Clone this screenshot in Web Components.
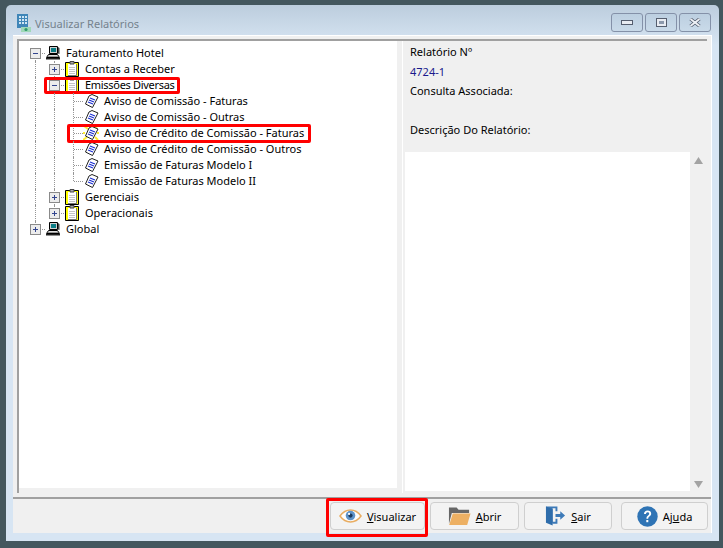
<!DOCTYPE html>
<html>
<head>
<meta charset="utf-8">
<title>Visualizar Relatórios</title>
<style>
html, body { margin: 0; height: 100%; background: #44575e; }
body { box-sizing: border-box; width: 723px; height: 548px; overflow: hidden; padding: 5px 4px 7px 6px; font: 11px "Noto Sans", sans-serif; color: #000; }
</style>
</head>
<body>
<report-window title="Visualizar Relatórios">
  <tree-panel slot="tree">
    <tree-row guides="" toggle="minus" icon="pc">Faturamento Hotel</tree-row>
    <tree-row guides="v,t" toggle="plus" icon="clip">Contas a Receber</tree-row>
    <tree-row guides="v,t" toggle="minus" icon="clip" mark="1">Emissões Diversas</tree-row>
    <tree-row guides="v,v,t" icon="doc">Aviso de Comissão - Faturas</tree-row>
    <tree-row guides="v,v,t" icon="doc">Aviso de Comissão - Outras</tree-row>
    <tree-row guides="v,v,t" icon="doc-new" mark="2">Aviso de Crédito de Comissão - Faturas</tree-row>
    <tree-row guides="v,v,t" icon="doc">Aviso de Crédito de Comissão - Outros</tree-row>
    <tree-row guides="v,v,t" icon="doc">Emissão de Faturas Modelo I</tree-row>
    <tree-row guides="v,v,l" icon="doc">Emissão de Faturas Modelo II</tree-row>
    <tree-row guides="v,t" toggle="plus" icon="clip">Gerenciais</tree-row>
    <tree-row guides="v,l" toggle="plus" icon="clip">Operacionais</tree-row>
    <tree-row guides="" toggle="plus" icon="pc" last>Global</tree-row>
  </tree-panel>
  <report-info slot="info" number="4724-1"></report-info>
  <action-button slot="actions" icon="eye" key="V" rest="isualizar" marked></action-button>
  <action-button slot="actions" icon="folder" key="A" rest="brir"></action-button>
  <action-button slot="actions" icon="exit" key="S" rest="air" narrow></action-button>
  <action-button slot="actions" icon="help" pre="Aj" key="u" rest="da" far></action-button>
</report-window>

<script>
const ICONS = {
  pc: `<svg width="16" height="16" viewBox="0 0 16 16">
    <path d="M4.500 1.500h8v7h-8z" fill="#d0d0d0" stroke="#000"/><path d="M6 3h5v4H6z" fill="#0a7d86"/>
    <path d="M13 2l1.500 1v6L13 8.500z" fill="#444"/>
    <path d="M3.500 9.500h9l2 3h-13z" fill="#e0e0e0" stroke="#000"/><path d="M1 13h14v1.500H1z" fill="#222"/>
    <path d="M3.500 11.500h9" stroke="#555" stroke-dasharray="1 1"/></svg>`,
  clip: `<svg width="16" height="16" viewBox="0 0 16 16">
    <path d="M1.500 1.500h13v14h-13z" fill="#ffff00" stroke="#000"/>
    <path d="M4 3h8v11H4z" fill="#fff"/><path d="M12.500 3v11.500H4" fill="none" stroke="#777"/>
    <path d="M6 .5h4v2.500H6z" fill="#a8a8a8" stroke="#444"/>
    <path d="M5 6.500h6M5 8.500h6M5 10.500h6M5 12.500h6" stroke="#c4c4c4"/></svg>`,
  doc: `<svg width="16" height="16" viewBox="0 0 16 16">
    <path d="M6 3l3-1.500 6 2.500-5.500 10.500L2.500 11z" fill="#fff" stroke="#222"/>
    <path d="M7 5l5 2M6 7l5 2M5 9l5 2" stroke="#1b2fd0" stroke-width="1.200"/></svg>`,
  'doc-new': `<svg width="16" height="16" viewBox="0 0 16 16">
    <path d="M1 1l4 3M15.500 0L12 3M0 15l4-3M15 15l-3-3M0 8h2M14 8h2" stroke="#ffee33" stroke-width="2"/>
    <path d="M6 3l3-1.500 6 2.500-5.500 10.500L2.500 11z" fill="#fff" stroke="#222"/>
    <path d="M7 5l5 2M6 7l5 2M5 9l5 2" stroke="#1b2fd0" stroke-width="1.200"/></svg>`,
  eye: `<svg width="23" height="14" viewBox="0 0 24 14">
    <path d="M1 7C5 1.500 9 .8 12 .8S19 1.500 23 7c-4 5.500-8 6.200-11 6.200S5 12.500 1 7z" fill="#fff" stroke="#e9ad62" stroke-width="1.500"/>
    <circle cx="12" cy="6.500" r="5" fill="#5f93c8"/><circle cx="12" cy="6.500" r="2.200" fill="#1d3a5c"/><circle cx="10.500" cy="4.800" r="1.100" fill="#fff"/></svg>`,
  folder: `<svg width="23" height="20" viewBox="0 0 24 20">
    <path d="M1 1h8l2 2.500h11V7H4L1 18z" fill="#666"/>
    <path d="M5 7.500h18.500L20 19.500H1.200z" fill="#edb063"/></svg>`,
  exit: `<svg width="21" height="22" viewBox="0 0 22 22">
    <path d="M1 1h12v5h-2V3H8v14h3v-3h2v5H8z" fill="#3d7ab8"/>
    <path d="M1 1l7 3v17l-7-3z" fill="#2f6dab"/>
    <path d="M11 9h5V6l5 4.500-5 4.500v-3h-5z" fill="#3d7ab8"/></svg>`,
  help: `<svg width="21" height="21" viewBox="0 0 21 21">
    <circle cx="10.500" cy="10.500" r="10.200" fill="#2f74b5"/>
    <path d="M7 8c0-2.200 1.500-3.400 3.600-3.400S14.200 5.800 14.200 7.700c0 2.600-3 2.600-3 5H9.400c0-3.200 2.800-3.200 2.800-5 0-.9-.6-1.500-1.600-1.500S9 6.900 9 8z" fill="#fff"/>
    <rect x="9.300" y="14" width="2" height="2.200" fill="#fff"/></svg>`,
  app: `<svg width="16" height="20" viewBox="0 0 16 20">
    <path d="M1 1h11v14H1z" fill="#3f86b8"/>
    <path d="M3 3h2v2H3zM6 3h2v2H6zM9 3h2v2H9zM3 6h2v2H3zM6 6h2v2H6zM9 6h2v2H9zM3 9h2v2H3zM6 9h2v2H6zM9 9h2v2H9z" fill="#cfe6f4"/>
    <path d="M5 14h10v5H5z" fill="#9fd8b8"/><circle cx="10" cy="16.500" r="1.600" fill="#2f9a6a"/></svg>`
}

// toggle boxes of the tree
const toggleBox = (kind) => `<svg width="11" height="11" viewBox="0 0 11 11">
  <rect x=".5" y=".5" width="10" height="10" fill="#ececec" stroke="#8a8a8a"/>
  <path d="M3 5.500h5${kind === 'plus' ? 'M5.500 3v5' : ''}" stroke="#33458f"/></svg>`

class ReportWindow extends HTMLElement {
  connectedCallback() {
    const root = this.attachShadow({ mode: 'open' })
    root.innerHTML = `
    <style>
      :host { display: flex; flex-direction: column; box-sizing: border-box; height: 536px; padding: 0 7px 8px 7px;
        border-radius: 5px 5px 0 0; background: linear-gradient(#bccddd 0, #d7e5f3 40px); }
      .title { display: flex; align-items: center; box-sizing: border-box; height: 30px; padding-top: 6px; flex: none; }
      .app { margin-left: 3px; width: 15px; height: 20px; }
      .caption { margin-left: 4px; color: #75828d; font-size: 11px; flex: 1; }
      .ctl { display: flex; gap: 2px; margin-right: 1px; margin-top: -1px; }
      .ctl div { width: 30px; height: 17px; border: 1px solid #8491a8; border-radius: 3px; display: flex; align-items: center; justify-content: center;
        background: linear-gradient(#bccfe0, #c9dae9); }
      .client { flex: 1; min-height: 0; display: flex; flex-direction: column; background: #f0f0f0; border-top: 1px solid #fff; border-right: 1px solid #fff; }
      .panes { height: 452px; flex: none; display: flex; margin: 3px 4px 0 4px; border-top: 2px solid #a0a0a0; border-left: 2px solid #a0a0a0; }
      .tree { width: 378px; padding: 4px 0 0 7px; background: #fff; box-sizing: border-box; height: 447px; flex: none; }
      .split { width: 5px; background: #f0f0f0; flex: none; border-right: 1px solid #fff; }
      .info { flex: 1; min-width: 0; display: flex; }
      .bar { flex: 1; display: flex; justify-content: flex-end; gap: 5px; padding: 3px 3px 0 0; border-top: 2px solid #a0a0a0; margin-top: 4px; }
    </style>
    <div class="title">
      <span class="app">${ICONS.app}</span>
      <span class="caption">${this.getAttribute('title')}</span>
      <div class="ctl">
        <div><svg width="12" height="6"><rect x=".5" y=".5" width="11" height="4" fill="#e8ecf2" stroke="#555e6e"/></svg></div>
        <div><svg width="11" height="10"><rect x=".5" y=".5" width="10" height="8" fill="#e8ecf2" stroke="#555e6e"/><rect x="3" y="3" width="5" height="3" fill="#8c99ac"/></svg></div>
        <div><svg width="12" height="9"><path d="M1.500 1L6 4.500 10.500 1M1.500 8L6 4.500 10.500 8" fill="none" stroke="#555e6e" stroke-width="3.400"/><path d="M1.500 1L6 4.500 10.500 1M1.500 8L6 4.500 10.500 8" fill="none" stroke="#eef1f5" stroke-width="1.800"/></svg></div>
      </div>
    </div>
    <div class="client">
      <div class="panes">
        <div class="tree"><slot name="tree"></slot></div>
        <div class="split"></div>
        <div class="info"><slot name="info"></slot></div>
      </div>
      <div class="bar"><slot name="actions"></slot></div>
    </div>`
  }
}

class TreePanel extends HTMLElement {
  connectedCallback() {
    const root = this.attachShadow({ mode: 'open' })
    root.innerHTML = `<style>:host { display: block; font: 11px "Noto Sans", sans-serif; }</style><slot></slot>`
  }
}

class TreeRow extends HTMLElement {
  connectedCallback() {
    const guides = (this.getAttribute('guides') || '').split(',').filter(Boolean)
    const toggle = this.getAttribute('toggle')
    const root = this.attachShadow({ mode: 'open' })
    const top = guides.length === 0
    // root rows get their own cell: first one only runs down, last one only runs up
    if (top) guides.push(this.hasAttribute('last') ? 'l' : 'f')
    const cells = guides.map((g) => `<span class="cell ${g}"></span>`).join('')
    root.innerHTML = `
    <style>
      :host { display: flex; height: 16px; align-items: center; white-space: nowrap; }
      :host([mark="1"]) { letter-spacing: -.3px; }
      .cell { position: relative; width: 19px; height: 16px; flex: none; }
      .v::before, .t::before { content: ""; position: absolute; left: 9px; top: 0; bottom: 0; border-left: 1px dotted #969696; }
      .l::before { content: ""; position: absolute; left: 9px; top: 0; height: 8px; border-left: 1px dotted #969696; }
      .f::before { content: ""; position: absolute; left: 9px; top: 8px; bottom: 0; border-left: 1px dotted #969696; }
      .t::after, .l::after, .f::after { content: ""; position: absolute; left: 10px; right: 0; top: 8px; border-top: 1px dotted #969696; }
      .box { position: absolute; left: 4px; top: 3px; width: 11px; height: 11px; z-index: 1; line-height: 0; }
      .icon { width: 19px; height: 16px; flex: none; display: flex; align-items: center; }
      .text { padding: 0 2px; position: relative; line-height: 16px; }
      .mark { position: absolute; border: 3px solid #f00; border-radius: 2px; }
      .m1 { left: -39px; right: -3px; top: 0; bottom: -1px; }
      .m2 { left: -35px; right: -5px; top: -1px; bottom: -2px; }
    </style>
    ${cells}
    <span class="icon">${ICONS[this.getAttribute('icon')]}</span>
    <span class="text"><slot></slot></span>`
    if (toggle) {
      const last = root.querySelectorAll('.cell')[guides.length - 1]
      last.innerHTML = `<span class="box">${toggleBox(toggle)}</span>`
    }
    if (this.hasAttribute('mark')) {
      const m = document.createElement('span')
      m.className = `mark m${this.getAttribute('mark')}`
      root.querySelector('.text').appendChild(m)
    }
  }
}

class ReportInfo extends HTMLElement {
  connectedCallback() {
    const root = this.attachShadow({ mode: 'open' })
    root.innerHTML = `
    <style>
      :host { flex: 1; min-width: 0; display: flex; flex-direction: column; font: 11px "Noto Sans", sans-serif; }
      .head { height: 111px; padding: 1px 0 0 7px; box-sizing: border-box; flex: none; }
      .head div { height: 19.500px; line-height: 19.500px; }
      .n { color: #1a1a8c; }
      .desc { height: 339px; margin-left: 2px; flex: none; display: flex; background: #fff; }
      .fill { flex: 1; }
      .sb { width: 17px; flex: none; background: #f0f0f0; display: flex; flex-direction: column; justify-content: space-between; align-items: center; padding: 5px 0 3px; box-sizing: border-box; }
      .sb svg { display: block; }
    </style>
    <div class="head">
      <div>Relatório Nº</div>
      <div class="n">${this.getAttribute('number')}</div>
      <div>Consulta Associada:</div>
      <div></div>
      <div>Descrição Do Relatório:</div>
    </div>
    <div class="desc">
      <div class="fill"></div>
      <div class="sb">
        <svg width="9" height="7"><path d="M4.500 0L9 7H0z" fill="#a3a3a3"/></svg>
        <svg width="9" height="7"><path d="M4.500 7L9 0H0z" fill="#a3a3a3"/></svg>
      </div>
    </div>`
  }
}

class ActionButton extends HTMLElement {
  connectedCallback() {
    const root = this.attachShadow({ mode: 'open' })
    const pre = this.getAttribute('pre') || ''
    const marked = this.hasAttribute('marked')
    root.innerHTML = `
    <style>
      :host { display: block; position: relative; font: 11px "Noto Sans", sans-serif; }
      :host([far]) { margin-left: 4px; }
      button { all: unset; box-sizing: border-box; width: 89px; height: 28px; display: flex; align-items: center; justify-content: center; gap: 5px;
        border: 1px solid #cfcfcf; border-radius: 4px; background: #f3f3f3; color: #000; }
      :host([marked]) button { width: 95px; }
      :host([narrow]) button { width: 88px; }
      :host([far]) button { width: 87px; }
      u { text-underline-offset: 1px; }
      svg { display: block; }
      .mark { position: absolute; left: -4px; right: -3px; top: -4px; bottom: -4px; border: 3px solid #f00; border-radius: 2px; }
    </style>
    <button>${ICONS[this.getAttribute('icon')]}<span>${pre}<u>${this.getAttribute('key')}</u>${this.getAttribute('rest')}</span></button>
    ${marked ? '<div class="mark"></div>' : ''}`
  }
}

customElements.define('report-window', ReportWindow)
customElements.define('tree-panel', TreePanel)
customElements.define('tree-row', TreeRow)
customElements.define('report-info', ReportInfo)
customElements.define('action-button', ActionButton)
</script>
</body>
</html>
